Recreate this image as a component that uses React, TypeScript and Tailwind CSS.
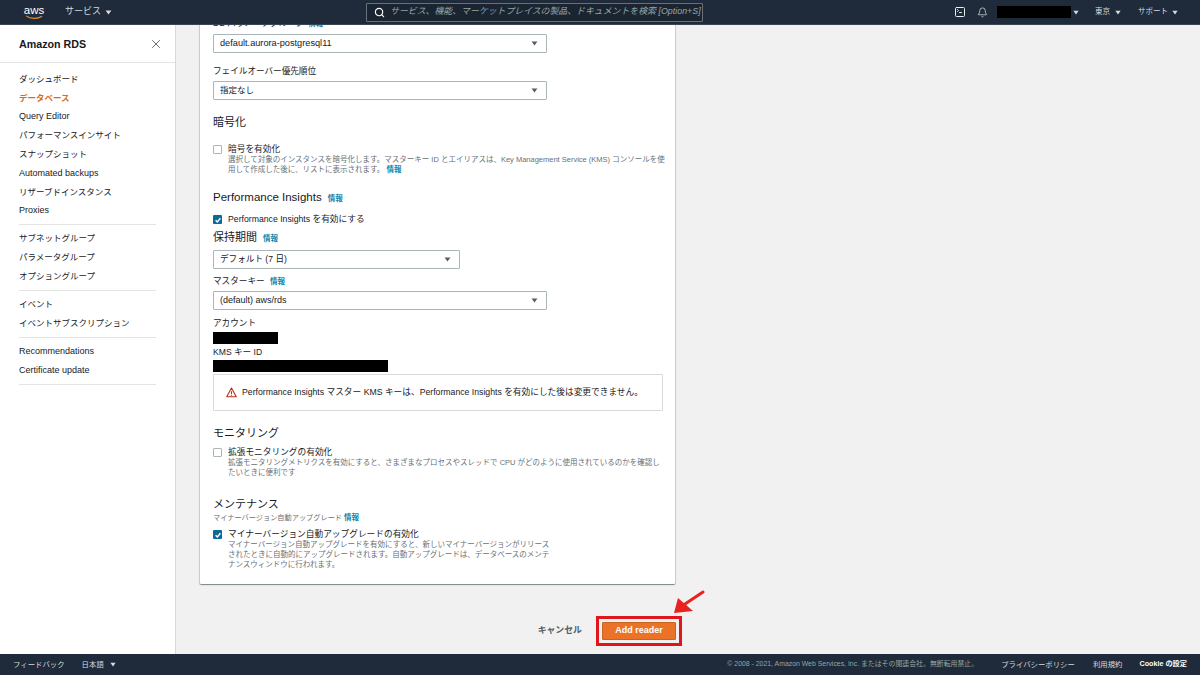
import { Bell, Search, SquareTerminal, X } from "lucide-react";

const font = "font-['Liberation_Sans','Noto_Sans_CJK_JP',sans-serif]";

function Caret({ className }: { className: string }) {
  return (
    <svg viewBox="0 0 8 6" className={className} fill="currentColor">
      <path d="M0.5 0.5h7L4 5.5z" />
    </svg>
  );
}

function Select({ value, wide = true, className }: { value: string; wide?: boolean; className: string }) {
  return (
    <div
      className={`flex h-[19px] items-center justify-between rounded-[1px] border border-[#aab7b8] bg-white pl-[6px] pr-[8px] text-[#16191f] ${wide ? "w-[334px]" : "w-[247px]"} ${className}`}
    >
      <span>{value}</span>
      <Caret className="h-[5px] w-[7px] text-[#545b64]" />
    </div>
  );
}

function Info({ className = "" }: { className?: string }) {
  return <span className={`text-[7.5px] font-bold text-[#0f83a8] ${className}`}>情報</span>;
}

function Checkbox({ checked }: { checked?: boolean }) {
  if (checked) {
    return (
      <span className="flex h-[9px] w-[9px] shrink-0 items-center justify-center rounded-[1px] bg-[#0b6a9a]">
        <svg viewBox="0 0 10 10" className="h-[8px] w-[8px]" fill="none" stroke="white" strokeWidth="1.8">
          <path d="M2 5.2l2.2 2.2L8 2.8" />
        </svg>
      </span>
    );
  }
  return <span className="h-[9px] w-[9px] shrink-0 rounded-[1px] border border-[#aab7b8] bg-white" />;
}

function CheckRow({ label, checked, className }: { label: string; checked?: boolean; className: string }) {
  return (
    <div className={`flex h-[11px] items-center gap-[6px] text-[8.7px] leading-[11px] text-[#16191f] ${className}`}>
      <Checkbox checked={checked} />
      <span>{label}</span>
    </div>
  );
}

function Heading({ children, className }: { children: React.ReactNode; className: string }) {
  return <div className={`h-[16px] leading-[16px] text-[#16191f] ${className}`}>{children}</div>;
}

const navGroups = [
  ["ダッシュボード", "データベース", "Query Editor", "パフォーマンスインサイト", "スナップショット", "Automated backups", "リザーブドインスタンス", "Proxies"],
  ["サブネットグループ", "パラメータグループ", "オプショングループ"],
  ["イベント", "イベントサブスクリプション"],
  ["Recommendations", "Certificate update"],
];

function Sidebar() {
  return (
    <aside className="w-[176px] shrink-0 border-r border-[#d5dbdb] bg-white">
      <div className="flex h-[38px] items-center justify-between border-b border-[#e3e5e5] pl-[19px] pr-[12px]">
        <span className="pt-[1px] text-[10.7px] font-bold text-[#16191f]">Amazon RDS</span>
        <X className="h-[14px] w-[14px] text-[#545b64]" strokeWidth={1.5} />
      </div>
      <div className="pt-[7px]">
        {navGroups.map((group, i) => (
          <div key={i} className={`mx-[19px] mb-[4px] border-b border-[#e3e5e5] ${i === 0 ? "pb-[3.6px]" : "pb-[4.6px]"}`}>
            {group.map((item) => (
              <div
                key={item}
                className={`flex h-[18.8px] items-center ${/^[A-Za-z]/.test(item) ? "text-[9px]" : "text-[8.5px]"} ${item === "データベース" ? "font-bold text-[#dd6b10]" : "text-[#16191f]"}`}
              >
                {item}
              </div>
            ))}
          </div>
        ))}
      </div>
    </aside>
  );
}

function Card() {
  return (
    <div className="mt-[-9px] w-[475px] rounded-b-[1px] bg-white pb-[14px] pl-[13px] shadow-[0_1px_1px_0_rgba(0,28,36,0.3),1px_1px_1px_0_rgba(0,28,36,0.15),-1px_1px_1px_0_rgba(0,28,36,0.15)]">
      <div className="h-[14px] text-[8.6px] leading-[14px] text-[#16191f]">
        DB パラメータグループ <Info className="ml-[2px]" />
      </div>
      <Select value="default.aurora-postgresql11" className="mt-[4px] text-[9.2px]" />
      <div className="mt-[11px] h-[14px] text-[8.6px] leading-[14px] text-[#16191f]">フェイルオーバー優先順位</div>
      <Select value="指定なし" className="mt-[3px] text-[8.5px]" />

      <Heading className="mt-[14px] text-[11px]">暗号化</Heading>
      <CheckRow label="暗号を有効化" className="mt-[14px]" />
      <p className="ml-[15px] text-[7.5px] leading-[10px] whitespace-nowrap text-[#687078]">
        選択して対象のインスタンスを暗号化します。マスターキー ID とエイリアスは、Key Management Service (KMS) コンソールを使
        <br />
        用して作成した後に、リストに表示されます。 <Info />
      </p>

      <Heading className="mt-[14px] text-[11.5px]">
        Performance Insights <Info className="ml-[3px]" />
      </Heading>
      <CheckRow label="Performance Insights を有効にする" checked className="mt-[9px]" />
      <Heading className="mt-[4px] text-[11px]">
        保持期間 <Info className="ml-[3px]" />
      </Heading>
      <Select value="デフォルト (7 日)" wide={false} className="mt-[5px] text-[8.6px]" />
      <div className="mt-[6px] h-[12px] text-[8.6px] leading-[12px] text-[#16191f]">
        マスターキー <Info className="ml-[3px]" />
      </div>
      <Select value="(default) aws/rds" className="mt-[4px] text-[9px]" />
      <div className="mt-[7px] h-[12px] text-[8.6px] leading-[12px] text-[#16191f]">アカウント</div>
      <div className="mt-[3px] h-[12px] w-[65px] bg-black" />
      <div className="mt-[2px] h-[12px] text-[8.6px] leading-[12px] text-[#16191f]">KMS キー ID</div>
      <div className="mt-[2px] h-[12px] w-[175px] bg-black" />
      <div className="mt-[2px] flex h-[37px] w-[450px] items-center gap-[5px] rounded-[1px] border border-[#d5dbdb] pl-[12px] text-[8.7px] whitespace-nowrap text-[#16191f]">
        <svg viewBox="0 0 12 12" className="h-[11px] w-[11px] shrink-0" fill="none" stroke="#b5301a" strokeWidth="1.2">
          <path d="M6 1.2L11.2 10.6H0.8z" strokeLinejoin="round" />
          <path d="M6 4.6v3.2M6 8.6v1" />
        </svg>
        <span>Performance Insights マスター KMS キーは、Performance Insights を有効にした後は変更できません。</span>
      </div>

      <Heading className="mt-[14px] text-[11px]">モニタリング</Heading>
      <CheckRow label="拡張モニタリングの有効化" className="mt-[6px]" />
      <p className="ml-[15px] text-[7.5px] leading-[10px] whitespace-nowrap text-[#687078]">
        拡張モニタリングメトリクスを有効にすると、さまざまなプロセスやスレッドで CPU がどのように使用されているのかを確認し
        <br />
        たいときに便利です
      </p>

      <Heading className="mt-[18px] text-[11px]">メンテナンス</Heading>
      <div className="mt-[1px] h-[10px] text-[7.2px] leading-[10px] text-[#687078]">
        マイナーバージョン自動アップグレード <Info />
      </div>
      <CheckRow label="マイナーバージョン自動アップグレードの有効化" checked className="mt-[6px]" />
      <p className="ml-[15px] text-[7.5px] leading-[10px] whitespace-nowrap text-[#687078]">
        マイナーバージョン自動アップグレードを有効にすると、新しいマイナーバージョンがリリース
        <br />
        されたときに自動的にアップグレードされます。自動アップグレードは、データベースのメンテ
        <br />
        ナンスウィンドウに行われます。
      </p>
    </div>
  );
}

export default function App() {
  return (
    <div className={`flex h-[675px] w-[1200px] flex-col overflow-hidden bg-[#f1f1f1] ${font}`}>
      <header className="flex h-[25px] shrink-0 items-center border-b border-[#3a4553] bg-[#1f2b3a] text-[#d5dbdb]">
        <div className="ml-[23px] flex w-[22px] flex-col items-center">
          <span className="text-[11.5px] leading-[10px] text-white">aws</span>
          <svg viewBox="0 0 22 6" className="h-[5px] w-[21px]" fill="none" strokeWidth="1.4">
            <path d="M1 1c5 4 14 4 19 0.5" stroke="#e8912d" />
          </svg>
        </div>
        <span className="ml-[20px] text-[9px]">サービス</span>
        <Caret className="ml-[4px] h-[5px] w-[7px]" />
        <div className="ml-[254px] flex h-[19px] w-[337px] items-center rounded-[1px] border border-[#687078] bg-[#1b2532] pl-[7px] text-[8.9px] italic text-[#95a5a6]">
          <Search className="h-[11px] w-[11px] text-white" strokeWidth={2.5} />
          <span className="ml-[5px] whitespace-nowrap">サービス、機能、マーケットプレイスの製品、ドキュメントを検索 [Option+S]</span>
        </div>
        <SquareTerminal className="ml-[251px] h-[12px] w-[12px] text-[#eaeded]" strokeWidth={2} />
        <Bell className="ml-[11px] h-[11px] w-[11px] text-[#eaeded]" strokeWidth={1.5} />
        <div className="ml-[9px] h-[12px] w-[74px] bg-black" />
        <Caret className="ml-[2px] h-[5px] w-[6px]" />
        <span className="ml-[16px] text-[7.5px]">東京</span>
        <Caret className="ml-[5px] h-[5px] w-[6px]" />
        <span className="ml-[17px] text-[7.5px]">サポート</span>
        <Caret className="ml-[4px] h-[5px] w-[6px]" />
      </header>

      <main className="flex min-h-0 flex-1 overflow-hidden">
        <Sidebar />
        <div className="pl-[24px]">
          <Card />
          <div className="relative mt-[32px] flex w-[482px] items-center justify-end">
            <span className="mr-[14px] text-[8.9px] font-bold text-[#545b64]">キャンセル</span>
            <div className="border-[3px] border-[#e0161b] p-[3px]">
              <button className="flex h-[18px] w-[74px] items-center justify-center rounded-[1px] border border-[#c7641f] bg-[#ec7228] text-[9px] font-bold text-white">
                Add reader
              </button>
            </div>
            <svg viewBox="0 0 34 26" className="absolute right-[-24px] top-[-27px] h-[26px] w-[34px]">
              <path d="M31 3L13 15" stroke="#e8231f" strokeWidth="3" strokeLinecap="round" />
              <path d="M2 24L6 9l15 13z" fill="#e8231f" />
            </svg>
          </div>
        </div>
      </main>

      <footer className="flex h-[21px] shrink-0 items-center bg-[#1f2b3a] text-[7.4px] text-[#d5dbdb]">
        <span className="ml-[13px]">フィードバック</span>
        <span className="ml-[17px]">日本語</span>
        <Caret className="ml-[6px] h-[5px] w-[6px]" />
        <span className="ml-auto text-[6.9px] text-[#95a5a6]">© 2008 - 2021, Amazon Web Services, Inc. またはその関連会社。無断転用禁止。</span>
        <span className="ml-[23px]">プライバシーポリシー</span>
        <span className="ml-[18px]">利用規約</span>
        <span className="ml-[17px] mr-[13px] text-[7.2px] font-bold text-white">Cookie の設定</span>
      </footer>
    </div>
  );
}
